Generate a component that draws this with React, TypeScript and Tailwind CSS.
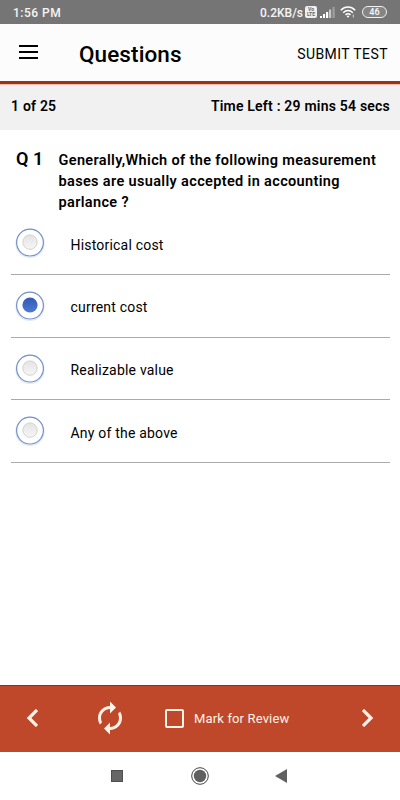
import React, { useState } from 'react';

const OPTIONS = ['Historical cost', 'current cost', 'Realizable value', 'Any of the above'];

function StatusBar() {
  return (
    <div className="flex h-6 items-center justify-between bg-[#757575] pl-[13px] pr-[13px] text-[#f5f5f5]">
      <span className="pt-[2px] text-[12px] leading-none font-medium tracking-[0.5px]">1:56 PM</span>
      <div className="flex items-center">
        <span className="pt-[2px] text-[12px] leading-none font-medium">0.2KB/s</span>
        <div className="ml-[2px] flex h-3 w-3 flex-col items-center justify-center rounded-[2px] bg-[#f0f0f0] text-[5px] leading-[5px] font-bold text-[#666]">
          <span>Vo</span>
          <span>LTE</span>
        </div>
        <svg className="ml-[3px] h-[11px] w-[15px]" viewBox="0 0 15 11" fill="#fff">
          <rect x="0" y="9" width="2" height="2" />
          <rect x="3" y="7" width="2" height="4" />
          <rect x="6" y="5" width="2.2" height="6" />
          <rect x="9" y="2.5" width="2.2" height="8.5" opacity="0.6" />
          <rect x="12.5" y="0" width="2.2" height="11" opacity="0.3" />
        </svg>
        <svg className="ml-[5px] h-3 w-4" viewBox="0 0 16 12" fill="none" stroke="#fff" strokeWidth="1.5">
          <path d="M.8 4.2C5-.1 11-.1 15.2 4.2" />
          <path d="M3.2 6.7c2.8-2.8 6.8-2.8 9.6 0" />
          <path d="M5.5 8.9c1.5-1.4 3.5-1.4 5 0" />
          <path d="M8 9.2l1.3 1.3L8 11.8l-1.3-1.3z" fill="#fff" stroke="none" />
          <path d="M13.3 8.5v3" strokeWidth="1" opacity=".7" />
        </svg>
        <div className="ml-[6px] flex h-3 w-[25px] items-center justify-center rounded-full border border-[#f0f0f0] bg-[#858585] text-[9px] leading-none font-semibold">
          46
        </div>
      </div>
    </div>
  );
}

function Radio({ checked }: { checked: boolean }) {
  return (
    <svg className="h-8 w-8 shrink-0" viewBox="0 0 32 32">
      <defs>
        <linearGradient id="radioOn" x1="0" y1="0" x2="0" y2="1">
          <stop offset="0" stopColor="#3059b4" />
          <stop offset="1" stopColor="#517ad2" />
        </linearGradient>
        <linearGradient id="radioOff" x1="0" y1="0" x2="0" y2="1">
          <stop offset="0" stopColor="#e4e4e4" />
          <stop offset="1" stopColor="#f6f6f6" />
        </linearGradient>
      </defs>
      <circle cx="16" cy="16.4" r="14" fill="none" stroke="#dfebf7" strokeWidth="1.4" />
      <circle cx="16" cy="15.6" r="13.4" fill="#fff" stroke="#7590c5" strokeWidth="1.2" />
      {checked ? (
        <circle cx="16" cy="15" r="7.6" fill="url(#radioOn)" />
      ) : (
        <circle cx="16" cy="15.1" r="7.2" fill="url(#radioOff)" stroke="#cecece" strokeWidth="0.9" />
      )}
    </svg>
  );
}

export default function App() {
  const [selected, setSelected] = useState(1);
  const [review, setReview] = useState(false);

  return (
    <div className="flex h-[800px] w-[400px] flex-col overflow-hidden bg-white font-[Roboto,sans-serif] text-black">
      <StatusBar />

      {/* Title bar */}
      <header className="flex h-[57px] shrink-0 items-center bg-[#fcfcfc] pt-[2px] pl-[19px] pr-3">
        <svg className="mb-[3px] h-[14px] w-[19px]" viewBox="0 0 19 14">
          <path d="M0 1h19M0 7h19M0 13h19" stroke="#000" strokeWidth="2" />
        </svg>
        <h1 className="ml-[41px] pt-[2px] text-[22.5px] leading-none font-medium tracking-[0.1px]">Questions</h1>
        <button className="ml-auto text-[14px] leading-none tracking-[0.42px]">SUBMIT TEST</button>
      </header>
      <div className="h-1 shrink-0 border-b border-[#efc0ad] bg-[#9b3413]" />

      {/* Progress and timer */}
      <div className="flex h-[45px] shrink-0 items-center justify-between bg-[#f1f1f1] pb-[3px] pl-[11px] pr-[10px] text-[14px] leading-none font-semibold tracking-[0.21px]">
        <span>1 of 25</span>
        <span>Time Left : 29 mins 54 secs</span>
      </div>

      {/* Question */}
      <main className="flex-1">
        <div className="flex h-[82.4px] pt-5 pl-4">
          <span className="w-[42.5px] text-[18px] leading-[18px] font-semibold">Q 1</span>
          <p className="w-[330px] text-[14.5px] leading-[21px] font-semibold tracking-[0.35px]">
            Generally,Which of the following measurement
            <br />
            bases are usually accepted in accounting
            <br />
            parlance ?
          </p>
        </div>
        <div className="px-[10.5px]">
          {OPTIONS.map((option, i) => (
            <div
              key={option}
              className="flex h-[62.67px] items-center border-b border-[#aaa] pl-[3px]"
              onClick={() => setSelected(i)}
            >
              <Radio checked={i === selected} />
              <span className="ml-[25px] pt-[3px] text-[14px] leading-none tracking-[0.2px]">{option}</span>
            </div>
          ))}
        </div>
      </main>

      {/* Test controls */}
      <footer className="flex h-[67px] shrink-0 items-center border-t border-[#8f3018] bg-[#bf482b] pb-[2px] text-[#fff3e8]">
        <svg className="ml-[26px] h-[18px] w-3" viewBox="0 0 12 18" fill="none" stroke="currentColor" strokeWidth="3.2">
          <path d="M11 1L3 9l8 8" />
        </svg>
        <svg className="ml-[54px] h-9 w-9" viewBox="0 0 24 24" fill="currentColor">
          <path d="M12 6v3l4-4-4-4v3c-4.42 0-8 3.58-8 8 0 1.57.46 3.03 1.24 4.26L6.7 14.8c-.45-.83-.7-1.79-.7-2.8 0-3.31 2.69-6 6-6zm6.76 1.74L17.3 9.2c.44.84.7 1.79.7 2.8 0 3.31-2.69 6-6 6v-3l-4 4 4 4v-3c4.42 0 8-3.58 8-8 0-1.57-.46-3.03-1.24-4.26z" />
        </svg>
        <button
          className="ml-[37px] flex h-[19px] w-[19px] items-center justify-center rounded-[2px] border-2 border-[#fff3e8]"
          onClick={() => setReview(!review)}
        >
          {review && <span className="h-2 w-2 bg-[#fff3e8]" />}
        </button>
        <span className="ml-[10px] pt-[1px] text-[13px] leading-none tracking-[0.15px]">Mark for Review</span>
        <svg className="ml-auto mr-[26px] h-[18px] w-3" viewBox="0 0 12 18" fill="none" stroke="currentColor" strokeWidth="3.2">
          <path d="M1 1l8 8-8 8" />
        </svg>
      </footer>

      {/* System navigation */}
      <nav className="flex h-12 shrink-0 items-center bg-white">
        <div className="ml-[111px] h-3 w-3 border border-[#505050] bg-[#666]" />
        <svg className="ml-[68px] h-[18px] w-[18px]" viewBox="0 0 18 18">
          <circle cx="9" cy="9" r="8.3" fill="none" stroke="#444" strokeWidth="1" />
          <circle cx="9" cy="9" r="6.2" fill="#606060" />
        </svg>
        <svg className="ml-[66px] h-[14px] w-3" viewBox="0 0 12 14">
          <path d="M12 0v14L0 7z" fill="#606060" />
        </svg>
      </nav>
    </div>
  );
}
